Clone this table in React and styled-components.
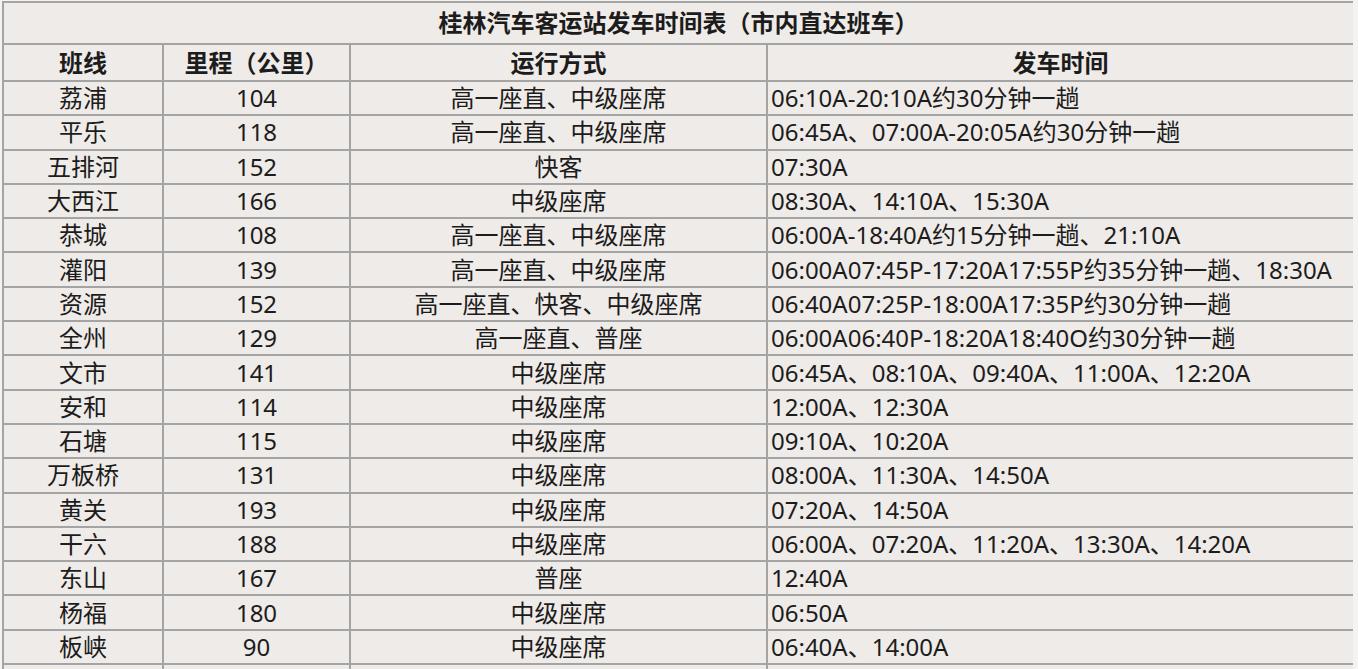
import React from "react";
import styled, { createGlobalStyle } from "styled-components";

const GlobalStyle = createGlobalStyle`
  html, body {
    margin: 0;
    padding: 0;
    background: #f5f3f1;
  }
`;

const Page = styled.div`
  padding: 1px 0 0 2px;
  width: 1351px;
  height: 669px;
  overflow: hidden;
`;

const Table = styled.table`
  width: 1351px;
  table-layout: fixed;
  border-collapse: collapse;
  background: #efebe8;
  font-family: "Noto Sans", "Noto Sans CJK SC", sans-serif;
  color: #1c1c1c;
`;

const Cell = styled.td`
  border: 2px solid #a4a4a4;
  padding: 0 ${(props) => (props.left ? "3px" : "0")};
  text-align: ${(props) => (props.left ? "left" : "center")};
  font-size: 24px;
  line-height: 1;
  white-space: nowrap;
  overflow: hidden;
  height: ${(props) => props.h || 34.3}px;
  box-sizing: border-box;
`;

const HeadCell = styled(Cell)`
  font-weight: 700;
  font-size: 24px;
`;

const rows = [
  ["荔浦", "104", "高一座直、中级座席", "06:10A-20:10A约30分钟一趟"],
  ["平乐", "118", "高一座直、中级座席", "06:45A、07:00A-20:05A约30分钟一趟"],
  ["五排河", "152", "快客", "07:30A"],
  ["大西江", "166", "中级座席", "08:30A、14:10A、15:30A"],
  ["恭城", "108", "高一座直、中级座席", "06:00A-18:40A约15分钟一趟、21:10A"],
  ["灌阳", "139", "高一座直、中级座席", "06:00A07:45P-17:20A17:55P约35分钟一趟、18:30A"],
  ["资源", "152", "高一座直、快客、中级座席", "06:40A07:25P-18:00A17:35P约30分钟一趟"],
  ["全州", "129", "高一座直、普座", "06:00A06:40P-18:20A18:40O约30分钟一趟"],
  ["文市", "141", "中级座席", "06:45A、08:10A、09:40A、11:00A、12:20A"],
  ["安和", "114", "中级座席", "12:00A、12:30A"],
  ["石塘", "115", "中级座席", "09:10A、10:20A"],
  ["万板桥", "131", "中级座席", "08:00A、11:30A、14:50A"],
  ["黄关", "193", "中级座席", "07:20A、14:50A"],
  ["干六", "188", "中级座席", "06:00A、07:20A、11:20A、13:30A、14:20A"],
  ["东山", "167", "普座", "12:40A"],
  ["杨福", "180", "中级座席", "06:50A"],
  ["板峡", "90", "中级座席", "06:40A、14:00A"],
  ["", "", "", ""],
];

export default function App() {
  return (
    <>
      <GlobalStyle />
      <Page>
        <Table>
          <colgroup>
            <col style={{ width: 160 }} />
            <col style={{ width: 187 }} />
            <col style={{ width: 417 }} />
            <col style={{ width: 587 }} />
          </colgroup>
          <tbody>
            <tr>
              <HeadCell as="th" colSpan={4} h={42}>
                桂林汽车客运站发车时间表（市内直达班车）
              </HeadCell>
            </tr>
            <tr>
              <HeadCell as="th" h={37}>班线</HeadCell>
              <HeadCell as="th" h={37}>里程（公里）</HeadCell>
              <HeadCell as="th" h={37}>运行方式</HeadCell>
              <HeadCell as="th" h={37}>发车时间</HeadCell>
            </tr>
            {rows.map((r, i) => (
              <tr key={i}>
                <Cell>{r[0]}</Cell>
                <Cell>{r[1]}</Cell>
                <Cell>{r[2]}</Cell>
                <Cell left>{r[3]}</Cell>
              </tr>
            ))}
          </tbody>
        </Table>
      </Page>
    </>
  );
}
